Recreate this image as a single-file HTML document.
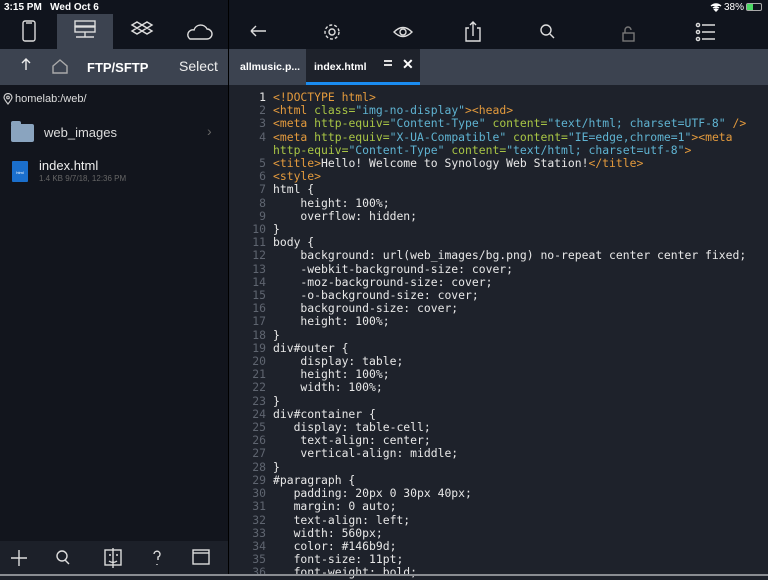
<!DOCTYPE html>
<html><head><style>
*{margin:0;padding:0;box-sizing:border-box}
body{width:768px;height:576px;overflow:hidden;background:#1e222b;font-family:"Liberation Sans",sans-serif;position:relative}
.abs{position:absolute}
#top{left:0;top:0;width:768px;height:49px;background:#10141d}
#nav{left:0;top:49px;width:768px;height:36px;background:#3c4350}
#side{left:0;top:85px;width:228px;height:456px;background:#12151d}
#bot{left:0;top:541px;width:228px;height:35px;background:#1c2029}
#div{left:228px;top:0;width:1px;height:576px;background:#000}
.t{color:#fff;font-size:10px;font-weight:bold}
pre{position:absolute;left:0;top:91px;font-family:"DejaVu Sans Mono",monospace;font-size:11.4px;line-height:13.2px;color:#e8e8e8}
.n{color:#5f6570;display:inline-block;width:273px;text-align:right;padding-right:7px}
.n1{color:#e8e8e8}
.g{color:#e39a3d}.a{color:#a8c545}.s{color:#5fb3d1}
svg{position:absolute}
</style></head><body>
<div class="abs" id="top"></div>
<div class="abs" style="left:57px;top:14px;width:56px;height:35px;background:#3c4350"></div>
<div class="abs" id="nav"></div>
<div class="abs" id="side"></div>
<div class="abs" id="bot"></div>
<pre><span class="n n1">1</span><span class="g">&lt;!DOCTYPE html&gt;</span>
<span class="n">2</span><span class="g">&lt;html </span><span class="a">class=</span><span class="s">"img-no-display"</span><span class="g">&gt;&lt;head&gt;</span>
<span class="n">3</span><span class="g">&lt;meta </span><span class="a">http-equiv=</span><span class="s">"Content-Type"</span> <span class="a">content=</span><span class="s">"text/html; charset=UTF-8"</span> <span class="g">/&gt;</span>
<span class="n">4</span><span class="g">&lt;meta </span><span class="a">http-equiv=</span><span class="s">"X-UA-Compatible"</span> <span class="a">content=</span><span class="s">"IE=edge,chrome=1"</span><span class="g">&gt;&lt;meta</span>
<span class="n"></span><span class="a">http-equiv=</span><span class="s">"Content-Type"</span> <span class="a">content=</span><span class="s">"text/html; charset=utf-8"</span><span class="g">&gt;</span>
<span class="n">5</span><span class="g">&lt;title&gt;</span>Hello! Welcome to Synology Web Station!<span class="g">&lt;/title&gt;</span>
<span class="n">6</span><span class="g">&lt;style&gt;</span>
<span class="n">7</span>html {
<span class="n">8</span>    height: 100%;
<span class="n">9</span>    overflow: hidden;
<span class="n">10</span>}
<span class="n">11</span>body {
<span class="n">12</span>    background: url(web_images/bg.png) no-repeat center center fixed;
<span class="n">13</span>    -webkit-background-size: cover;
<span class="n">14</span>    -moz-background-size: cover;
<span class="n">15</span>    -o-background-size: cover;
<span class="n">16</span>    background-size: cover;
<span class="n">17</span>    height: 100%;
<span class="n">18</span>}
<span class="n">19</span>div#outer {
<span class="n">20</span>    display: table;
<span class="n">21</span>    height: 100%;
<span class="n">22</span>    width: 100%;
<span class="n">23</span>}
<span class="n">24</span>div#container {
<span class="n">25</span>   display: table-cell;
<span class="n">26</span>    text-align: center;
<span class="n">27</span>    vertical-align: middle;
<span class="n">28</span>}
<span class="n">29</span>#paragraph {
<span class="n">30</span>   padding: 20px 0 30px 40px;
<span class="n">31</span>   margin: 0 auto;
<span class="n">32</span>   text-align: left;
<span class="n">33</span>   width: 560px;
<span class="n">34</span>   color: #146b9d;
<span class="n">35</span>   font-size: 11pt;
<span class="n">36</span>   font-weight: bold;
</pre>
<div class="abs" id="div"></div>
<div class="abs t" style="left:4px;top:2px">3:15 PM&nbsp;&nbsp;&nbsp;Wed Oct 6</div>
<div class="abs t" style="left:724px;top:2px;font-weight:normal">38%</div>
<div class="abs" style="left:746px;top:3px;width:16px;height:8px;border:1px solid #aaa;border-radius:2px"><div style="width:6px;height:6px;background:#4cd964"></div></div>
<svg style="left:710px;top:3px" width="12" height="9" viewBox="0 0 12 9"><path d="M1 3Q6-1 11 3M3 5Q6 2.5 9 5M6 8L4.5 6.5Q6 5.5 7.5 6.5Z" stroke="#fff" stroke-width="1.4" fill="#fff"/></svg>
<svg style="left:0;top:14px" width="768" height="35" viewBox="0 0 768 35" fill="none" stroke="#ddd" stroke-width="1.4">
<rect x="23" y="7" width="12" height="20" rx="2"/><path d="M26 9h6"/>
<rect x="75" y="7" width="20" height="5"/><rect x="75" y="13" width="20" height="5"/><path d="M85 18v5M76 23h18"/>
<path d="M137 8l5 3-5 3-5-3zM147 8l5 3-5 3-5-3zM137 14l5 3-5 3-5-3zM147 14l5 3-5 3-5-3z"/>
<path d="M190 25h17a5 5 0 0 0 0-10 7 7 0 0 0-13 1 5 5 0 0 0-4 9z"/>
<path d="M251 17h15M251 17l5-5M251 17l5 5"/>
<circle cx="332" cy="18" r="3"/><circle cx="332" cy="18" r="7" stroke-dasharray="3 2"/>
<path d="M394 18q9-9 18 0q-9 9-18 0z"/><circle cx="403" cy="18" r="3"/>
<path d="M469 14h-3v13h14v-13h-3M473 22v-14M470 11l3-3 3 3"/>
<circle cx="546" cy="16" r="5"/><path d="M550 20l4 4"/>
<rect x="623" y="19" width="11" height="8" stroke="#777"/><path d="M625 19v-3a3 3 0 0 1 6 0" stroke="#777"/>
<circle cx="698" cy="11" r="1.6"/><circle cx="698" cy="18" r="1.6"/><circle cx="698" cy="25" r="1.6"/><path d="M702 11h13M702 18h13M702 25h13"/>
</svg>
<svg style="left:0;top:49px" width="228" height="36" fill="none" stroke="#eee" stroke-width="1.4"><path d="M26 21v-11M22 14l4-4 4 4"/><path d="M53 17l7-6 7 6v7h-14z" stroke="#aaa"/></svg>
<div class="abs" style="left:87px;top:60px;color:#fff;font-size:13px;font-weight:bold">FTP/SFTP</div>
<div class="abs" style="left:179px;top:58px;color:#eee;font-size:14px">Select</div>
<div class="abs" style="left:229px;top:49px;width:77px;height:36px;background:#3c4350"></div>
<div class="abs" style="left:240px;top:61px;color:#fff;font-size:10.5px;font-weight:bold">allmusic.p...</div>
<div class="abs" style="left:306px;top:49px;width:114px;height:36px;background:#1e222b;border-bottom:3px solid #1a8cf0"></div>
<div class="abs" style="left:314px;top:61px;color:#fff;font-size:10.5px;font-weight:bold">index.html</div>
<div class="abs" style="left:384px;top:60px;width:8px;height:6px;border-top:2px solid #ddd;border-bottom:2px solid #ddd"></div>
<div class="abs" style="left:402px;top:56px;color:#fff;font-size:14px;font-weight:bold">✕</div>
<svg style="left:3px;top:93px" width="10" height="12" fill="none" stroke="#ccc" stroke-width="1.2"><path d="M5 11Q1 6 1 4.5a4 4 0 0 1 8 0Q9 6 5 11z"/><circle cx="5" cy="4.5" r="1.3"/></svg>
<div class="abs" style="left:15px;top:93px;color:#ddd;font-size:11px">homelab:/web/</div>
<div class="abs" style="left:11px;top:124px;width:23px;height:18px;background:#8aa4bf;border-radius:2px"></div>
<div class="abs" style="left:11px;top:121px;width:10px;height:4px;background:#8aa4bf;border-radius:2px 2px 0 0"></div>
<div class="abs" style="left:44px;top:125px;color:#ddd;font-size:13px">web_images</div>
<div class="abs" style="left:207px;top:123px;color:#666;font-size:14px">›</div>
<div class="abs" style="left:12px;top:161px;width:16px;height:21px;background:#1b6fcc;border-radius:1px"><div style="font-size:4px;color:#fff;margin-top:9px;text-align:center">html</div></div>
<div class="abs" style="left:39px;top:158px;color:#eee;font-size:13px">index.html</div>
<div class="abs" style="left:39px;top:174px;color:#666;font-size:8px">1.4 KB 9/7/18, 12:36 PM</div>
<svg style="left:0;top:541px" width="228" height="35" fill="none" stroke="#ddd" stroke-width="1.4">
<path d="M19 9v16M11 17h16"/><circle cx="62" cy="15" r="5"/><path d="M65 19l4 4"/>
<rect x="105" y="9" width="16" height="15"/><path d="M113 7v20M109 14h2M116 14h2M109 20q4 3 8 0"/>
<path d="M154 13a3 3 0 1 1 4 3v3M157 23v1"/>
<rect x="193" y="9" width="16" height="14"/><path d="M193 12h16"/>
</svg>
<div class="abs" style="left:0;top:574px;width:768px;height:2px;background:#8a8d92"></div>
</body></html>
